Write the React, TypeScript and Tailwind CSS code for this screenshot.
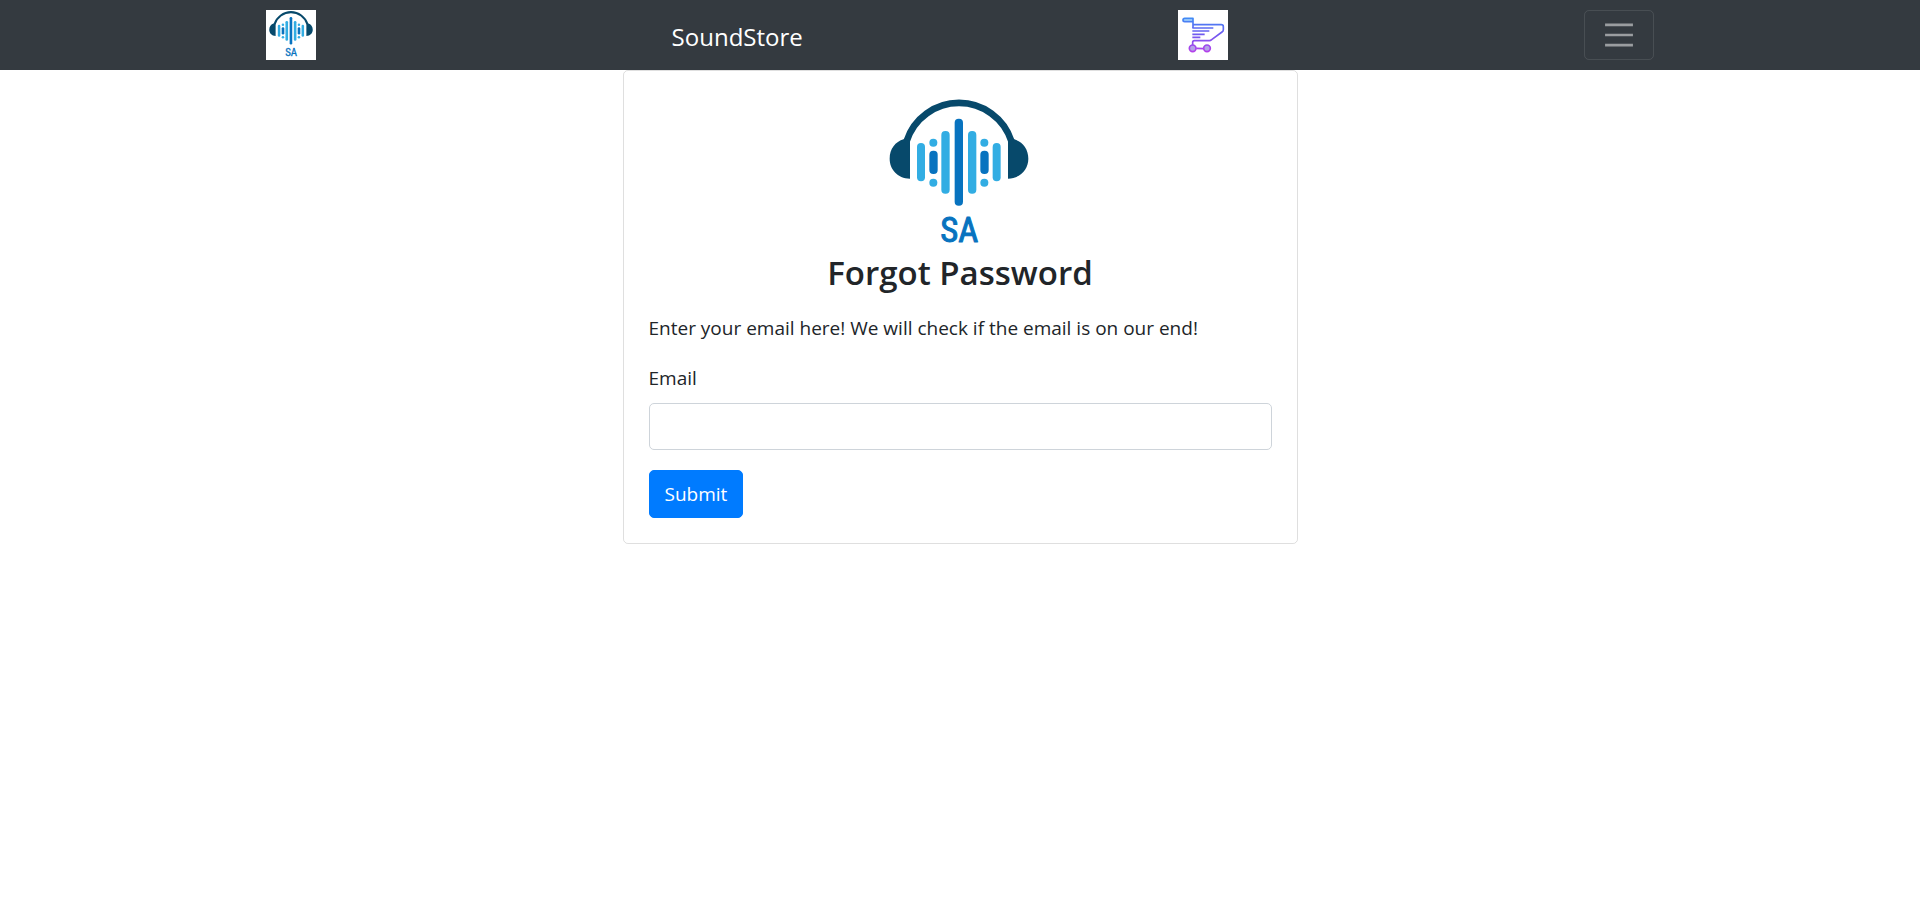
function Logo({ className, viewBox }: { className: string; viewBox: string }) {
  return (
    <svg viewBox={viewBox} className={className} role="img" aria-label="SA logo">
      <rect x="0" y="0" width="540" height="540" fill="#fff" />
      <path d="M110 168A165 165 0 0 1 424 168" fill="none" stroke="#07496b" strokeWidth="20" />
      <path d="M101 163Q110 158 120 156V281C82 280 59 252 59 221C59 192 76 170 101 163Z" fill="#07496b" />
      <path d="M433 163Q424 158 414 156V281C452 280 475 252 475 221C475 192 458 170 433 163Z" fill="#07496b" />
      <g fill="#32ade3">
        <rect x="141" y="174" width="24" height="115" rx="12" />
        <rect x="214" y="138" width="25" height="188" rx="12" />
        <rect x="294" y="138" width="25" height="188" rx="12" />
        <rect x="368" y="174" width="24" height="115" rx="12" />
        <circle cx="190" cy="173" r="12" />
        <circle cx="190" cy="293" r="12" />
        <circle cx="343" cy="173" r="12" />
        <circle cx="343" cy="293" r="12" />
      </g>
      <g fill="#0873bf">
        <rect x="178" y="197" width="25" height="70" rx="12" />
        <rect x="254" y="101" width="25" height="261" rx="12" />
        <rect x="331" y="197" width="25" height="70" rx="12" />
      </g>
      <text
        x="268"
        y="472"
        textAnchor="middle"
        fontSize="104"
        fill="#0873bf"
        stroke="#0873bf"
        strokeWidth="3"
        strokeLinejoin="round"
        className="font-['Roboto_Condensed','Liberation_Sans_Narrow',sans-serif]"
      >
        SA
      </text>
    </svg>
  );
}

function Cart({ className }: { className: string }) {
  return (
    <svg viewBox="51 30 150 150" className={className} aria-hidden="true">
      <defs>
        <linearGradient id="cart" gradientUnits="userSpaceOnUse" x1="0" y1="52" x2="0" y2="156">
          <stop offset="0" stopColor="#3f8cf5" />
          <stop offset="0.45" stopColor="#6a5cf0" />
          <stop offset="1" stopColor="#b53fea" />
        </linearGradient>
      </defs>
      <rect x="51" y="30" width="150" height="150" fill="#fff" />
      <g fill="none" stroke="url(#cart)" strokeWidth="5" strokeLinejoin="round">
        <path d="M96 84V55H71Q66 55 66 60T71 65H96" fill="#a9d8fb" />
        <path d="M96 74H181Q187 74 187 80V89Q187 93 183 96L152 119Q149 122 145 122H100Q95 122 95 127V135" />
        <path d="M94 84H157M94 93H145M94 103H131M94 112H118" />
        <path d="M106 145L127 146" />
        <circle cx="95" cy="145" r="10" fill="#b4a2e8" />
        <circle cx="138" cy="145" r="10" fill="#b4a2e8" />
      </g>
    </svg>
  );
}

export default function App() {
  return (
    <div className="min-h-screen bg-white font-['Open_Sans','Noto_Sans',sans-serif] text-[19px] leading-[30px] text-[#212529]">
      <header className="bg-[#343a40] px-5 py-2.5">
        <nav className="mx-auto flex max-w-[1388px] items-center justify-between">
          <a href="#home">
            <Logo className="block size-[50px] overflow-hidden" viewBox="28 33 478 478" />
          </a>
          <a href="#store" className="mr-5 pt-1 text-2xl text-white">
            SoundStore
          </a>
          <a href="#cart" aria-label="Cart">
            <Cart className="block size-[50px]" />
          </a>
          <button
            type="button"
            aria-label="Toggle navigation"
            className="flex h-[50px] w-[70px] items-center justify-center rounded-[5px] border border-white/10"
          >
            <svg viewBox="0 0 30 30" className="size-[38px]" aria-hidden="true">
              <path d="M4 7h22M4 15h22M4 23h22" stroke="#fff" strokeOpacity="0.5" strokeWidth="2" />
            </svg>
          </button>
        </nav>
      </header>
      <main className="mx-auto max-w-[675px] rounded-[5px] border border-black/[.125] p-[25px]">
        <Logo className="mx-auto block size-[150px] overflow-visible" viewBox="45 33 450 450" />
        <h3 className="mt-1.5 text-center text-[33px] leading-[42px] font-semibold">Forgot Password</h3>
        <form className="mt-[19px]" onSubmit={(e) => e.preventDefault()}>
          <p className="mb-5">Enter your email here! We will check if the email is on our end!</p>
          <label htmlFor="email" className="mb-2.5 block">
            Email
          </label>
          <input
            id="email"
            type="email"
            className="block h-[47px] w-full rounded-[5px] border border-[#ced4da] bg-white px-[15px]"
          />
          <button
            type="submit"
            className="mt-5 block h-12 rounded-[5px] border border-[#007bff] bg-[#007bff] px-[15px] text-white"
          >
            Submit
          </button>
        </form>
      </main>
    </div>
  );
}
